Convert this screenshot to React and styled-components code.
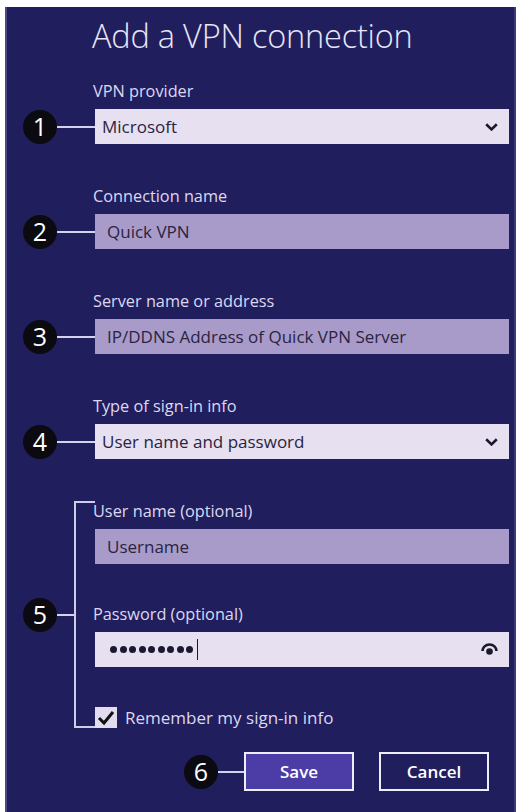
import React from "react";
import styled, { createGlobalStyle } from "styled-components";

const Global = createGlobalStyle`
  html, body { margin: 0; padding: 0; background: #ffffff; }
  body { font-family: "Open Sans", "Noto Sans", "Liberation Sans", sans-serif; }
  * { box-sizing: border-box; }
`;

const Panel = styled.div`
  margin: 7px 2px 0 5px;
  width: 511px;
  min-height: 805px;
  background: #211e5e;
  border-left: 2px solid #4a4785;
  border-right: 2px solid #3c3a78;
  padding: 8px 5px 0 0;
  display: flex;
  flex-direction: column;
`;

const Title = styled.h1`
  margin: 0 0 25px 85px;
  font-family: "Open Sans", sans-serif;
  font-weight: 300;
  font-size: 32.5px;
  line-height: 41px;
  color: #e8e6f6;
  letter-spacing: -0.2px;
`;

const Fields = styled.div`
  display: flex;
  flex-direction: column;
  gap: ${(p) => p.$gap}px;
`;

const Field = styled.div`
  display: flex;
  flex-direction: column;
`;

const Label = styled.div`
  margin: 0 0 8px ${(p) => (p.$inGroup ? -2 : 86)}px;
  font-size: 16.3px;
  line-height: 20px;
  color: #dcd8f0;
`;

const Row = styled.div`
  display: flex;
  align-items: center;
  padding-left: 16px;
`;

const Badge = styled.div`
  flex: none;
  width: 34px;
  height: 34px;
  border-radius: 50%;
  background: #0b0a10;
  color: #ffffff;
  display: flex;
  align-items: center;
  justify-content: center;
  font-family: "Open Sans", sans-serif;
  font-weight: 500;
  font-size: 25px;
  line-height: 1;
`;

const Connector = styled.div`
  flex: none;
  width: ${(p) => p.$w}px;
  height: 2px;
  background: #d6d2ec;
`;

const Box = styled.div`
  flex: 1 0 auto;
  height: 35px;
  display: flex;
  align-items: center;
  justify-content: space-between;
  padding: 0 11px 0 ${(p) => (p.$select ? 7 : 12)}px;
  background: ${(p) => (p.$filled ? "#a99bc9" : "#e6e0f0")};
  color: #2a2442;
  font-size: 17px;
`;

const Dots = styled.span`
  display: flex;
  align-items: center;
  gap: 2.5px;
  padding-left: 3px;
`;

const Dot = styled.span`
  width: 7px;
  height: 7px;
  border-radius: 50%;
  background: #1b1830;
`;

const Caret = styled.span`
  width: 1.5px;
  height: 21px;
  background: #1b1830;
  margin-left: 1px;
`;

const GroupRow = styled.div`
  display: flex;
  align-items: center;
  padding-left: 16px;
`;

const Bracket = styled.div`
  flex: none;
  align-self: stretch;
  width: 21px;
  border: 2px solid #cfcbe8;
  border-right: none;
`;

const GroupBody = styled.div`
  flex: 1;
  display: flex;
  flex-direction: column;
  gap: 40px;
`;

const CheckRow = styled.label`
  display: flex;
  align-items: center;
  gap: 8px;
  height: 21px;
  font-size: 17px;
  color: #dcd8f0;
`;

const CheckBox = styled.span`
  width: 22px;
  height: 21px;
  background: #e2dcef;
  display: flex;
  align-items: center;
  justify-content: center;
`;

const Buttons = styled.div`
  display: flex;
  align-items: center;
  justify-content: flex-end;
  margin-top: 24px;
  padding-right: 20px;
`;

const Button = styled.button`
  width: 110px;
  height: 39px;
  margin-left: ${(p) => p.$ml || 0}px;
  border: 2px solid #eeedfb;
  background: ${(p) => (p.$primary ? "#4b3ca6" : "transparent")};
  color: #ffffff;
  font-family: "Open Sans", sans-serif;
  font-weight: 600;
  font-size: 17px;
  padding: 0;
`;

const Chevron = () => (
  <svg width="13" height="8" viewBox="0 0 13 8">
    <polyline points="1.2,1.2 6.5,6.4 11.8,1.2" fill="none" stroke="#1c1830" strokeWidth="2.6" />
  </svg>
);

const Eye = () => (
  <svg width="17" height="13" viewBox="0 0 17 13">
    <path d="M1.5 8 A7 6.5 0 0 1 15.5 8" fill="none" stroke="#1c1830" strokeWidth="2.6" />
    <circle cx="8.5" cy="8.5" r="3.3" fill="#1c1830" />
  </svg>
);

const Check = () => (
  <svg width="18" height="16" viewBox="0 0 18 16">
    <polyline points="2,8 7,13 16,2" fill="none" stroke="#111" strokeWidth="3" />
  </svg>
);

const SimpleField = ({ n, label, children }) => (
  <Field>
    <Label>{label}</Label>
    <Row>
      <Badge>{n}</Badge>
      <Connector $w={38} />
      {children}
    </Row>
  </Field>
);

export default function App() {
  return (
    <>
      <Global />
      <Panel>
        <Title>Add a VPN connection</Title>
        <Fields $gap={42}>
          <SimpleField n="1" label="VPN provider">
            <Box $select>
              <span>Microsoft</span>
              <Chevron />
            </Box>
          </SimpleField>
          <SimpleField n="2" label="Connection name">
            <Box $filled>Quick VPN</Box>
          </SimpleField>
          <SimpleField n="3" label="Server name or address">
            <Box $filled>IP/DDNS Address of Quick VPN Server</Box>
          </SimpleField>
          <SimpleField n="4" label="Type of sign-in info">
            <Box $select>
              <span>User name and password</span>
              <Chevron />
            </Box>
          </SimpleField>
          <GroupRow>
            <Badge>5</Badge>
            <Connector $w={17} />
            <Bracket />
            <GroupBody>
              <Field>
                <Label $inGroup>User name (optional)</Label>
                <Box $filled>Username</Box>
              </Field>
              <Field>
                <Label $inGroup>Password (optional)</Label>
                <Box>
                  <Dots>
                    {Array.from({ length: 9 }).map((_, i) => (
                      <Dot key={i} />
                    ))}
                    <Caret />
                  </Dots>
                  <Eye />
                </Box>
              </Field>
              <CheckRow>
                <CheckBox>
                  <Check />
                </CheckBox>
                Remember my sign-in info
              </CheckRow>
            </GroupBody>
          </GroupRow>
        </Fields>
        <Buttons>
          <Badge>6</Badge>
          <Connector $w={26} />
          <Button $primary>Save</Button>
          <Button $ml={25}>Cancel</Button>
        </Buttons>
      </Panel>
    </>
  );
}
